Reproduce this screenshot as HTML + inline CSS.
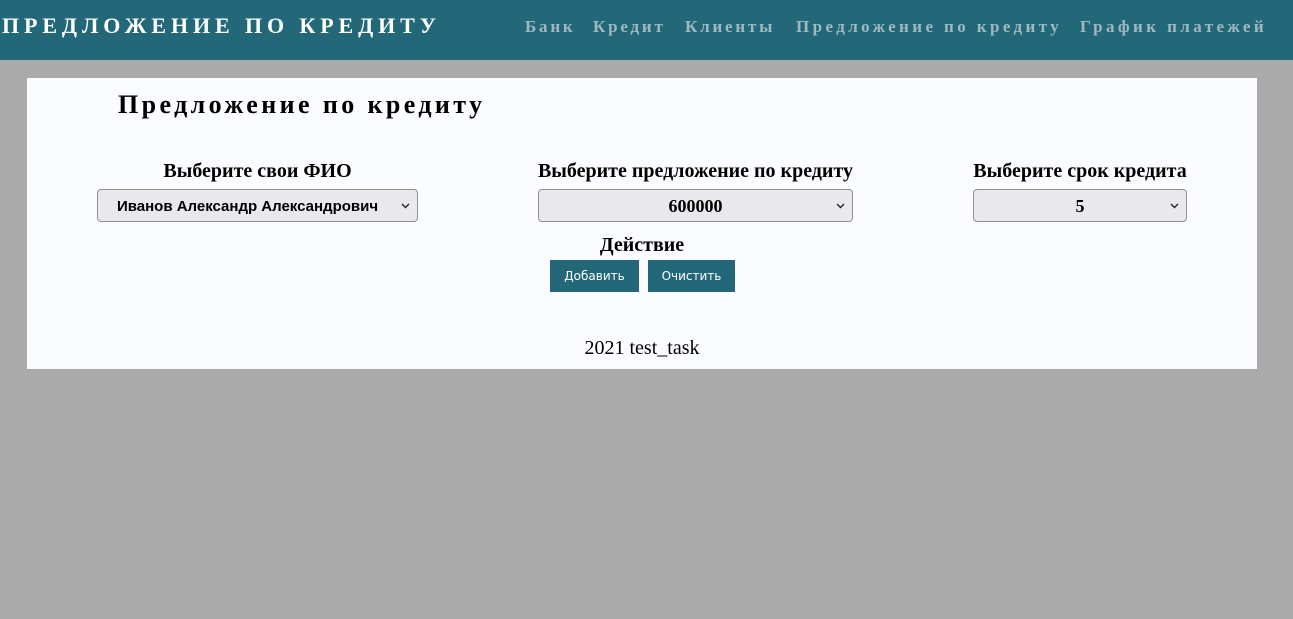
<!DOCTYPE html>
<html><head><meta charset="utf-8"><style>
*{margin:0;padding:0;box-sizing:border-box}
body{width:1293px;height:619px;background:#aaaaaa;position:relative;overflow:hidden;font-family:"Liberation Serif",serif}
.hdr{position:absolute;left:0;top:0;width:1293px;height:60px;background:#236878}
.logo{position:absolute;left:2px;top:13px;color:#fff;font-weight:bold;font-size:22px;letter-spacing:4.9px;white-space:nowrap}
.nav{position:absolute;top:17px;color:#9fb9c1;font-weight:bold;font-size:17px;letter-spacing:3.4px;white-space:nowrap}
.card{position:absolute;left:27px;top:78px;width:1230px;height:291px;background:#fbfcff}
.t{position:absolute;left:118px;top:90px;font-size:26px;font-weight:bold;letter-spacing:3.4px;white-space:nowrap}
.lbl{position:absolute;font-size:20px;font-weight:bold;white-space:nowrap;text-align:center}
.sel{position:absolute;height:33px;top:189px;background:#e9e8ed;border:1px solid #8f8f96;border-radius:4px;font-family:"Liberation Sans",sans-serif;font-weight:bold;font-size:15px;line-height:33px;text-align:center}
.sel svg{position:absolute;right:7px;top:13px}
.btn{position:absolute;top:260px;height:32px;background:#236878;color:#fff;font-family:"DejaVu Sans",sans-serif;font-size:12px;line-height:33px;text-align:center}
</style></head><body>
<div class="hdr"><div class="logo">ПРЕДЛОЖЕНИЕ ПО КРЕДИТУ</div>
<div class="nav" style="left:525px;letter-spacing:2.8px">Банк</div>
<div class="nav" style="left:593px;letter-spacing:2.8px">Кредит</div>
<div class="nav" style="left:685px;letter-spacing:2.8px">Клиенты</div>
<div class="nav" style="left:796px">Предложение по кредиту</div>
<div class="nav" style="left:1080px">График платежей</div></div>
<div class="card"></div>
<div class="t">Предложение по кредиту</div>
<div class="lbl" style="left:97px;width:321px;top:160px">Выберите свои ФИО</div>
<div class="lbl" style="left:520px;width:351px;top:160px">Выберите предложение по кредиту</div>
<div class="lbl" style="left:953px;width:254px;top:160px">Выберите срок кредита</div>
<div class="sel" style="left:97px;width:321px;padding-right:20px">Иванов Александр Александрович<svg width="9" height="6" viewBox="0 0 9 6"><path d="M1 1l3.5 3.5L8 1" stroke="#222" stroke-width="1.4" fill="none"/></svg></div>
<div class="sel" style="left:538px;width:315px;font-family:'Liberation Serif',serif;font-size:18px">600000<svg width="9" height="6" viewBox="0 0 9 6"><path d="M1 1l3.5 3.5L8 1" stroke="#222" stroke-width="1.4" fill="none"/></svg></div>
<div class="sel" style="left:973px;width:214px;font-family:'Liberation Serif',serif;font-size:18px">5<svg width="9" height="6" viewBox="0 0 9 6"><path d="M1 1l3.5 3.5L8 1" stroke="#222" stroke-width="1.4" fill="none"/></svg></div>
<div class="lbl" style="left:542px;width:200px;top:234px">Действие</div>
<div class="btn" style="left:550px;width:89px">Добавить</div>
<div class="btn" style="left:648px;width:87px">Очистить</div>
<div style="position:absolute;left:542px;width:200px;top:337px;text-align:center;font-size:20px">2021 test_task</div>
</body></html>
